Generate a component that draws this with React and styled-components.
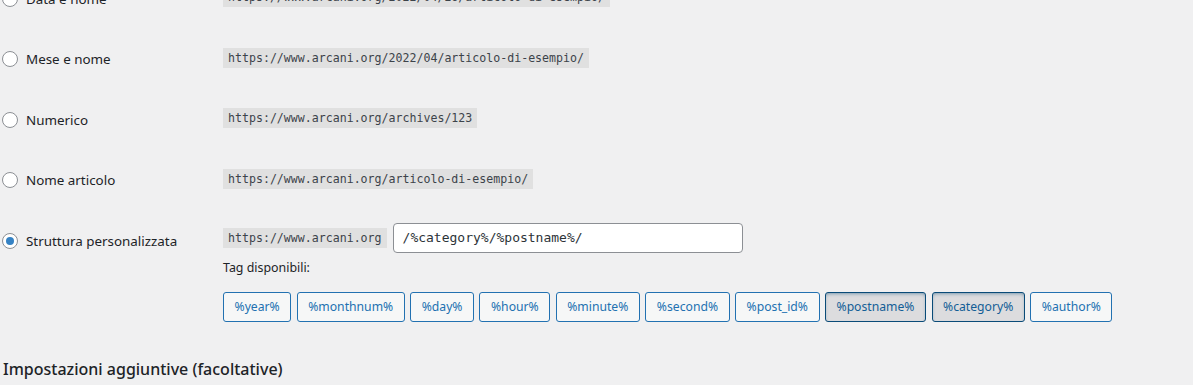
import React from "react";
import styled, { createGlobalStyle } from "styled-components";

const GlobalStyle = createGlobalStyle`
  html, body {
    margin: 0;
    padding: 0;
    background: #f0f0f1;
    overflow: hidden;
  }
  body {
    font-family: "Noto Sans", "Open Sans", sans-serif;
    color: #1d2327;
  }
`;

const Page = styled.div`
  height: 385px;
  overflow: hidden;
`;

// the screen is scrolled, so the first option is cut at the top
const Scroller = styled.div`
  margin-top: -33px;
`;

const Row = styled.div`
  display: flex;
  align-items: flex-start;
  padding: 20px 0 20.5px;
`;

const LabelCell = styled.label`
  width: 223px;
  flex: none;
  height: 20px;
  margin: 1.5px 0 -1.5px;
  display: flex;
  align-items: center;
  gap: 8px;
  font-size: 13.4px;
  line-height: 20px;
  color: #1d2327;
`;

const Radio = styled.span`
  box-sizing: border-box;
  width: 16px;
  height: 16px;
  margin-left: 2px;
  border-radius: 50%;
  border: 1px solid #8c8f94;
  background: #fff;
  display: flex;
  align-items: center;
  justify-content: center;
  &::after {
    content: "";
    display: ${(p) => (p.$checked ? "block" : "none")};
    width: 8px;
    height: 8px;
    border-radius: 50%;
    background: #3582c4;
  }
`;

const ValueCell = styled.div`
  flex: 1;
  display: flex;
  flex-direction: column;
  align-items: flex-start;
  margin-top: ${(p) => (p.$tight ? "-6.5px" : "0")};
`;

const Code = styled.code`
  display: block;
  box-sizing: border-box;
  height: 20px;
  padding: 0 5px;
  line-height: 20px;
  background: #e0e0e0;
  color: #3c434a;
  font-family: "DejaVu Sans Mono", "Liberation Mono", monospace;
  font-size: 11.6px;
  white-space: nowrap;
`;

const StructureLine = styled.div`
  display: flex;
  align-items: center;
  gap: 6px;
`;

const TextInput = styled.div`
  box-sizing: border-box;
  width: 350px;
  height: 30px;
  padding: 0 9px;
  border: 1px solid #8c8f94;
  border-radius: 4px;
  background: #fff;
  display: flex;
  align-items: center;
  font-family: "DejaVu Sans Mono", "Liberation Mono", monospace;
  font-size: 13px;
  color: #2c3338;
`;

const TagsTitle = styled.p`
  margin: 5.5px 0 14px;
  font-size: 12.4px;
  line-height: 19.5px;
  color: #1d2327;
`;

const Tags = styled.div`
  display: flex;
  gap: 5.5px;
`;

const TagButton = styled.span`
  box-sizing: border-box;
  height: 30px;
  padding: 0 10.5px;
  display: flex;
  align-items: center;
  border-radius: 3px;
  font-size: 12.2px;
  border: 1px solid ${(p) => (p.$active ? "#0a4b78" : "#2271b1")};
  background: ${(p) => (p.$active ? "#dcdcde" : "#f6f7f7")};
  color: ${(p) => (p.$active ? "#135e96" : "#2271b1")};
  box-shadow: ${(p) => (p.$active ? "inset 0 2px 5px -3px #0a4b78" : "none")};
`;

const SectionTitle = styled.h2`
  margin: 15px 0 0 3px;
  font-size: 16px;
  font-weight: 500;
  line-height: 25px;
  color: #1d2327;
`;

const options = [
  { label: "Data e nome", url: "https://www.arcani.org/2022/04/26/articolo-di-esempio/" },
  { label: "Mese e nome", url: "https://www.arcani.org/2022/04/articolo-di-esempio/" },
  { label: "Numerico", url: "https://www.arcani.org/archives/123" },
  { label: "Nome articolo", url: "https://www.arcani.org/articolo-di-esempio/" }
];

const tags = [
  "%year%",
  "%monthnum%",
  "%day%",
  "%hour%",
  "%minute%",
  "%second%",
  "%post_id%",
  "%postname%",
  "%category%",
  "%author%"
];

const activeTags = ["%postname%", "%category%"];

export default function App() {
  return (
    <Page>
      <GlobalStyle />
      <Scroller>
        {options.map((o) => (
          <Row key={o.label}>
            <LabelCell>
              <Radio />
              {o.label}
            </LabelCell>
            <ValueCell>
              <Code>{o.url}</Code>
            </ValueCell>
          </Row>
        ))}
        <Row>
          <LabelCell>
            <Radio $checked />
            Struttura personalizzata
          </LabelCell>
          <ValueCell $tight>
            <StructureLine>
              <Code>https://www.arcani.org</Code>
              <TextInput>/%category%/%postname%/</TextInput>
            </StructureLine>
            <TagsTitle>Tag disponibili:</TagsTitle>
            <Tags>
              {tags.map((t) => (
                <TagButton key={t} $active={activeTags.includes(t)}>
                  {t}
                </TagButton>
              ))}
            </Tags>
          </ValueCell>
        </Row>
        <SectionTitle>Impostazioni aggiuntive (facoltative)</SectionTitle>
      </Scroller>
    </Page>
  );
}
